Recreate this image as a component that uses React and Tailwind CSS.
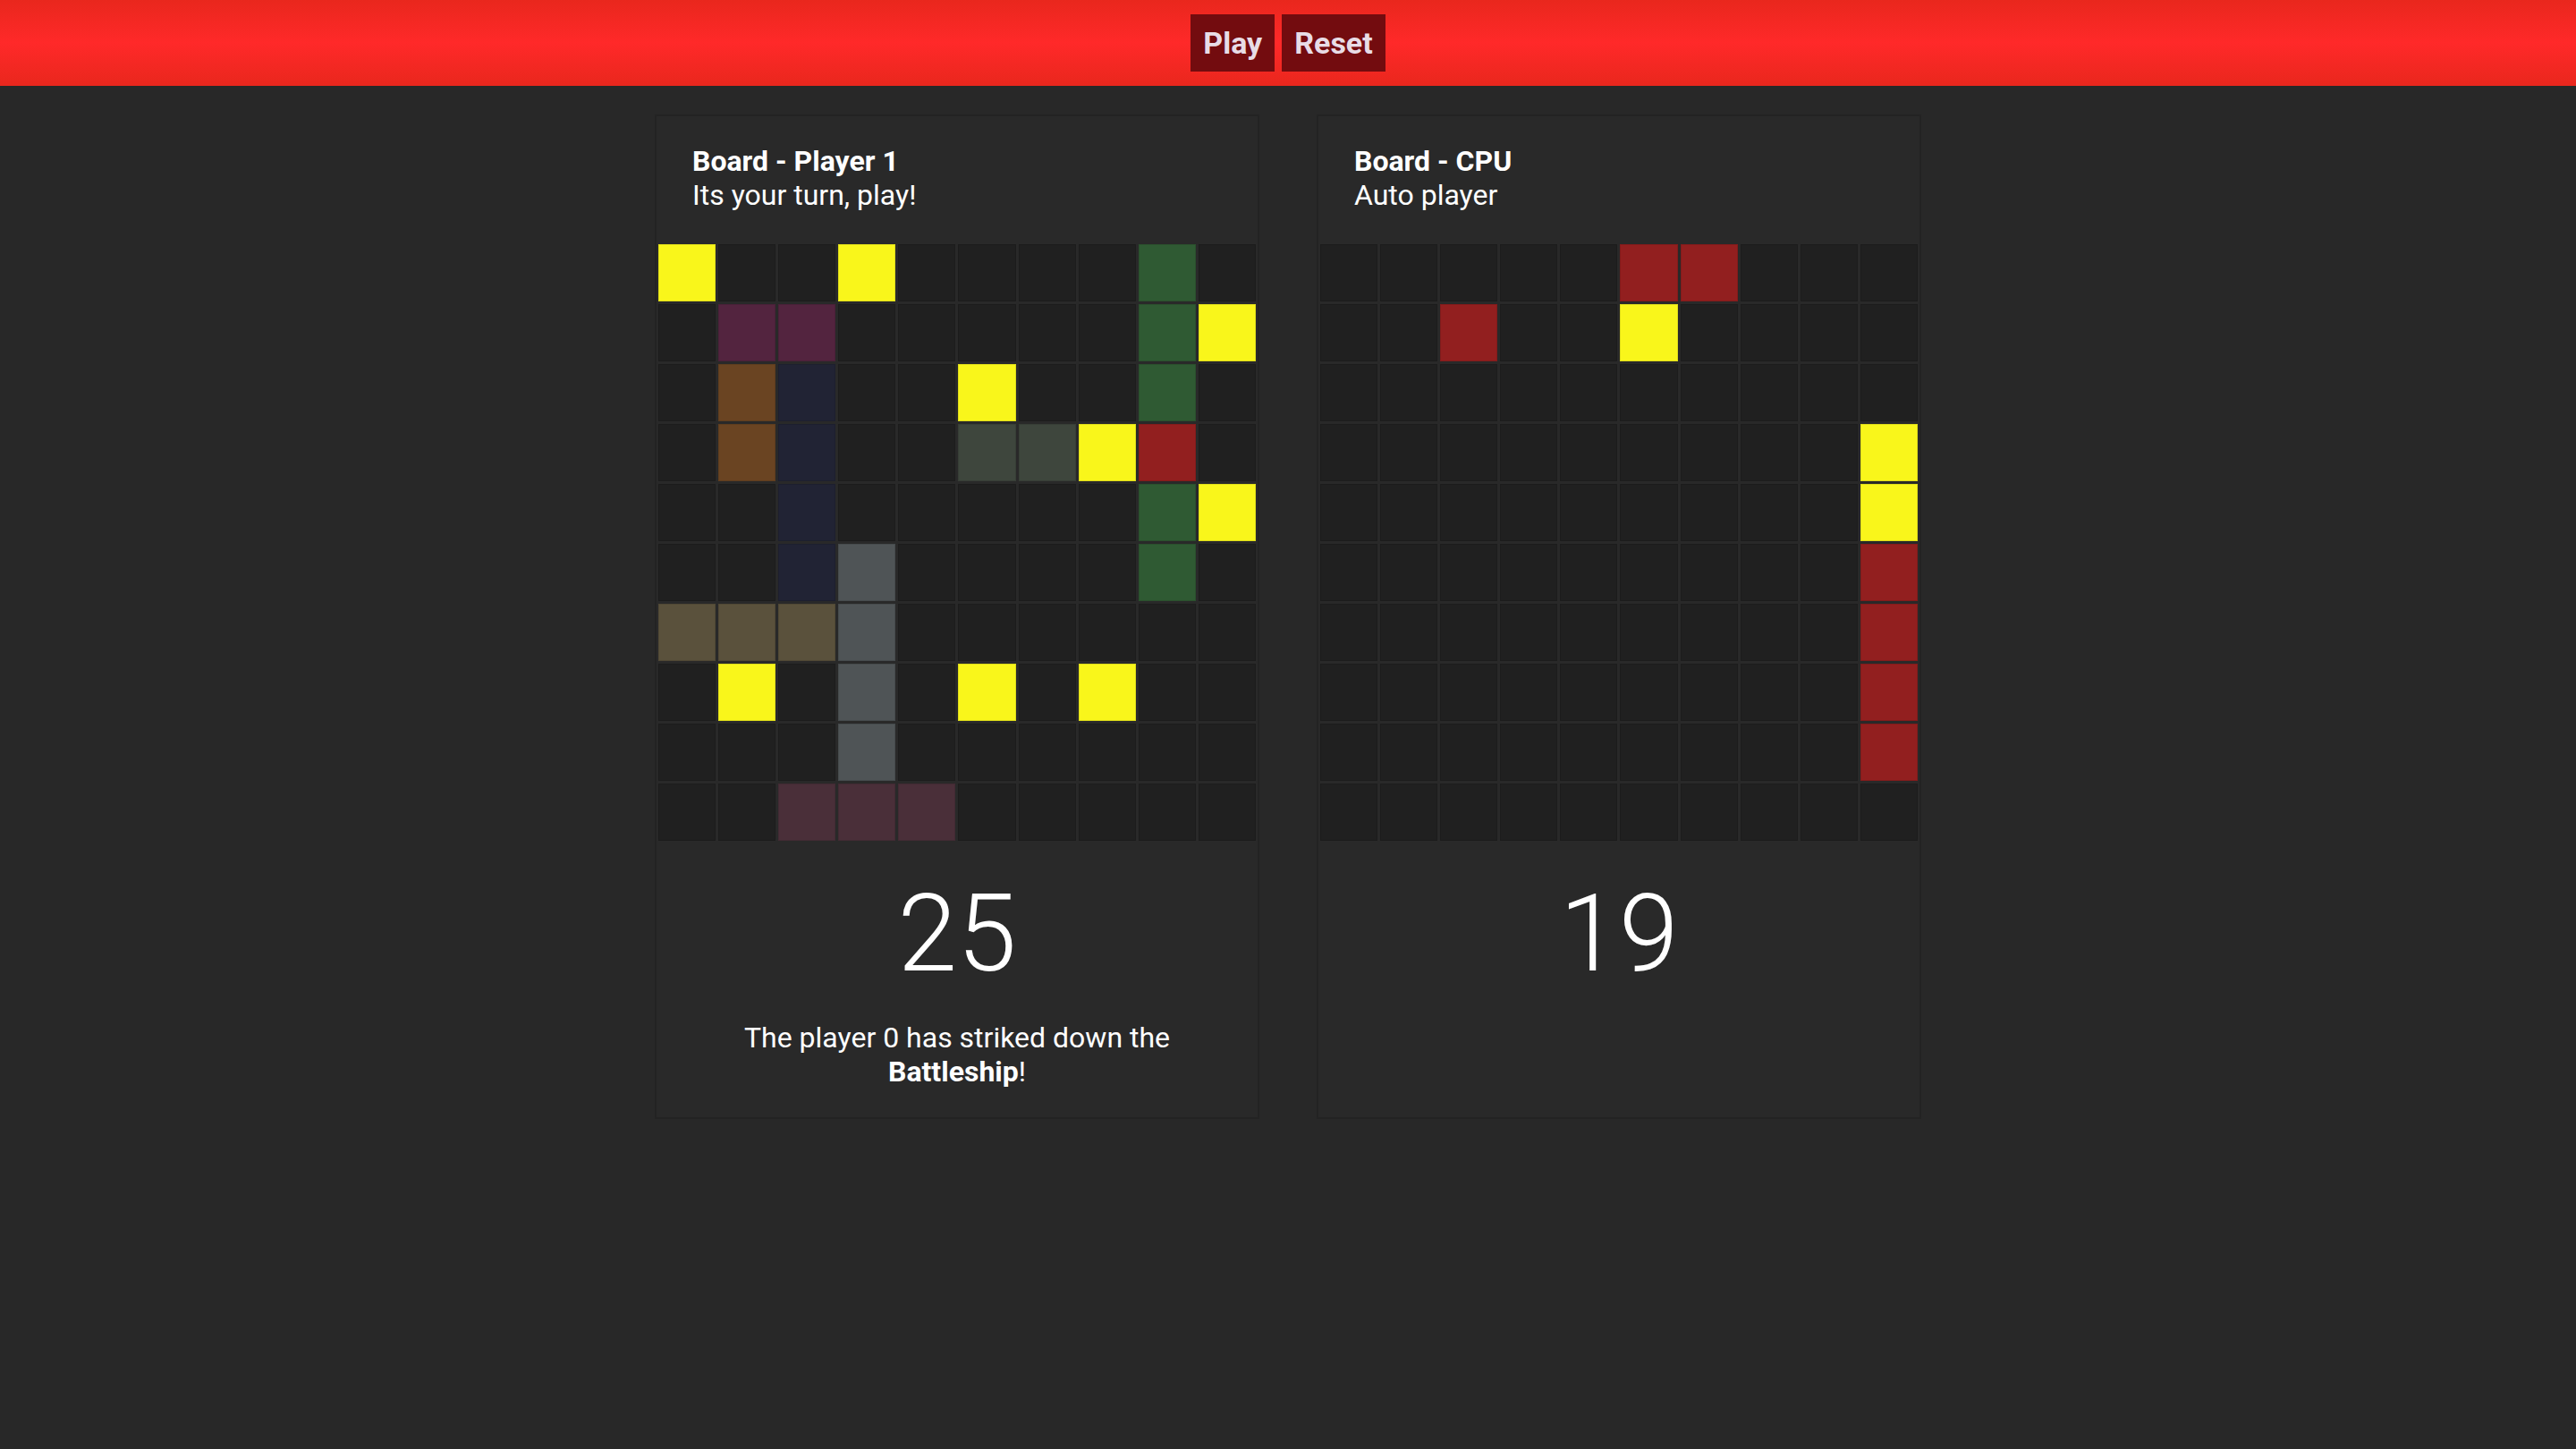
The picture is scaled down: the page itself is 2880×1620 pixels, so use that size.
const C = {
  '.': 'bg-[#202020]',
  Y: 'bg-[#f9f61b]',
  G: 'bg-[#2f5a33]',
  P: 'bg-[#53243f]',
  B: 'bg-[#6a4422]',
  N: 'bg-[#212334]',
  S: 'bg-[#3e463d]',
  R: 'bg-[#921f1f]',
  A: 'bg-[#4f5456]',
  O: 'bg-[#5a513c]',
  M: 'bg-[#4a2f39]',
};

const playerBoard = [
  'Y..Y....G.',
  '.PP.....GY',
  '.BN..Y..G.',
  '.BN..SSYR.',
  '..N.....GY',
  '..NA....G.',
  'OOOA......',
  '.Y.A.Y.Y..',
  '...A......',
  '..MMM.....',
];

const cpuBoard = [
  '.....RR...',
  '..R..Y....',
  '..........',
  '.........Y',
  '.........Y',
  '.........R',
  '.........R',
  '.........R',
  '.........R',
  '..........',
];

function Board({ title, subtitle, rows, score, message }) {
  return <section className="mx-8 flex w-[676px] flex-col border-2 border-[#232323] bg-[#292929]">
    <div className="pl-10 pt-8 pb-9 text-[32px] leading-[37.5px]">
      <h2 className="font-bold">{title}</h2>
      <p>{subtitle}</p>
    </div>
    <div className="grid grid-cols-10 auto-rows-[64px] gap-[3px] px-[1.5px]">
      {rows.join('').split('').map((c, i) => <div key={i} className={`border border-black/10 ${C[c]}`} />)}
    </div>
    <div className="pt-[34px] text-center text-[120px] font-light leading-[normal]">{score}</div>
    <div className="mt-7 px-10 pb-8 text-center text-[32px] leading-[37.5px]">
      {message ? <>The player 0 has striked down the <strong className="font-bold">{message}</strong>!</> : <span>&nbsp;</span>}
    </div>
  </section>;
}

export default function App() {
  return <div className="min-h-screen bg-[#282828] font-['Roboto',sans-serif] text-white">
    <header className="flex h-24 items-center justify-center gap-2 bg-[linear-gradient(180deg,#e9271d_0%,#ff2929_50%,#e9271d_100%)]">
      <button className="h-16 bg-[#730c0f] px-[14px] text-[34px] font-bold text-[#e8dce6]">Play</button>
      <button className="h-16 bg-[#730c0f] px-[14px] text-[34px] font-bold text-[#e8dce6]">Reset</button>
    </header>
    <main className="flex justify-center pt-8">
      <Board title="Board - Player 1" subtitle="Its your turn, play!" rows={playerBoard} score={25} message="Battleship" />
      <Board title="Board - CPU" subtitle="Auto player" rows={cpuBoard} score={19} />
    </main>
  </div>;
}
